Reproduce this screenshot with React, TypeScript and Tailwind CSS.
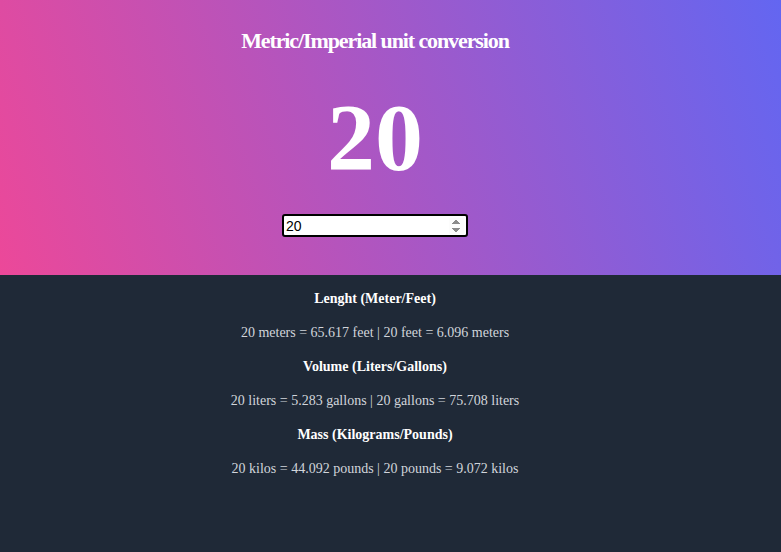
import { useState } from 'react';

const conversions = [
  {
    title: 'Lenght (Meter/Feet)',
    line: (n: number) =>
      `${n} meters = ${(n * 3.28084).toFixed(3)} feet | ${n} feet = ${(n / 3.28084).toFixed(3)} meters`,
  },
  {
    title: 'Volume (Liters/Gallons)',
    line: (n: number) =>
      `${n} liters = ${(n * 0.264172).toFixed(3)} gallons | ${n} gallons = ${(n / 0.264172).toFixed(3)} liters`,
  },
  {
    title: 'Mass (Kilograms/Pounds)',
    line: (n: number) =>
      `${n} kilos = ${(n * 2.20462).toFixed(3)} pounds | ${n} pounds = ${(n / 2.20462).toFixed(3)} kilos`,
  },
];

export default function App() {
  const [value, setValue] = useState('20');
  const num = Number(value) || 0;

  return (
    <div className="min-h-screen bg-[#1f2937] font-['Liberation_Serif',serif]">
      {/* Hero */}
      <div className="h-[275px] bg-[linear-gradient(72deg,#ec4899,#6366f1)] flex flex-col items-center pt-[25px] pr-[31px]">
        <h1 className="text-[22px] leading-8 font-bold text-white tracking-[-1.1px]">
          Metric/Imperial unit conversion
        </h1>
        <div className="mt-[33px] text-8xl leading-none font-bold text-white">{value}</div>
        <input
          type="number"
          autoFocus
          value={value}
          onChange={(e) => setValue(e.target.value)}
          className="mt-[28px] w-[186px] h-[23px] bg-white border-2 border-black rounded-[3px] pl-[2px] pr-[2px] font-['Liberation_Sans',sans-serif] text-[14px] text-black outline-none"
        />
      </div>

      {/* Results */}
      <div className="flex flex-col items-center pt-[14px] pr-[31px] gap-[14px] text-sm leading-5">
        {conversions.map((c) => (
          <div key={c.title} className="flex flex-col items-center gap-[14px]">
            <h2 className="font-bold text-white">{c.title}</h2>
            <p className="text-[#d1d5db]">{c.line(num)}</p>
          </div>
        ))}
      </div>
    </div>
  );
}
